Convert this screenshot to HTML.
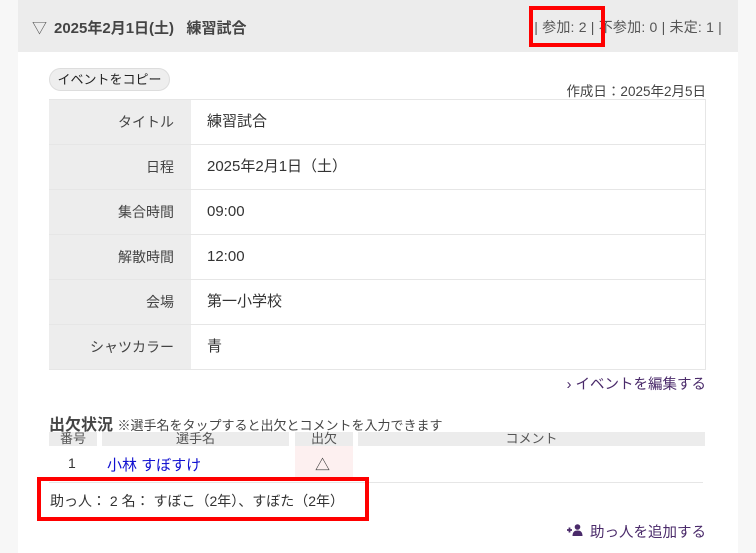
<!DOCTYPE html>
<html><head><meta charset="utf-8"><style>
*{margin:0;padding:0;box-sizing:border-box}
body{width:756px;height:553px;background:#f7f7f7;font-family:"Liberation Sans","Noto Sans CJK JP",sans-serif;color:#333;position:relative;overflow:hidden}
.panel{position:absolute;left:18px;top:0;width:720px;height:553px;background:#fff}
.hdr{position:absolute;left:18px;top:0;width:720px;height:52px;background:#ececec}
.a{position:absolute;white-space:nowrap}
.r{position:absolute;white-space:nowrap;text-align:right}
.lab{position:absolute;left:49px;width:142px;height:44px;background:#ededed;text-align:right;padding-right:17px;font-size:14px;line-height:44px;color:#444}
.val{position:absolute;left:192px;width:514px;height:44px;font-size:15px;line-height:44px;padding-left:15px;color:#333}
.line{position:absolute;left:49px;width:657px;height:1px;background:#e6e6e6}
.th{position:absolute;top:432px;height:14px;background:#ececec;font-size:13px;line-height:14px;text-align:center;color:#555}
.red{position:absolute;border:4px solid #f00}
</style></head><body>
<div class="panel"></div>
<div class="hdr"></div>
<div class="a" style="left:32px;top:17px;font-size:15px;color:#555">▽</div>
<div class="a" style="left:54px;top:17px;font-size:15px;font-weight:bold;color:#444">2025年2月1日(土)&nbsp;&nbsp; 練習試合</div>
<div class="r" style="right:34px;top:17px;font-size:14px;letter-spacing:0.2px;color:#555">| 参加: 2 | 不参加: 0 | 未定: 1 |</div>
<div class="red" style="left:529px;top:6px;width:76px;height:41px"></div>
<div class="a" style="left:49px;top:68px;width:121px;height:23px;border:1px solid #ddd;border-radius:12px;background:#eee;font-size:13px;line-height:21px;text-align:center;color:#222">イベントをコピー</div>
<div class="r" style="right:50px;top:80px;font-size:13.5px;color:#444">作成日：2025年2月5日</div>
<div class="line" style="top:99px"></div>
<div style="position:absolute;left:705px;top:99px;width:1px;height:270px;background:#e6e6e6"></div>
<div class="lab" style="top:100px">タイトル</div><div class="val" style="top:100px">練習試合</div>
<div class="line" style="top:144px"></div>
<div class="lab" style="top:145px">日程</div><div class="val" style="top:145px">2025年2月1日（土）</div>
<div class="line" style="top:189px"></div>
<div class="lab" style="top:190px">集合時間</div><div class="val" style="top:190px">09:00</div>
<div class="line" style="top:234px"></div>
<div class="lab" style="top:235px">解散時間</div><div class="val" style="top:235px">12:00</div>
<div class="line" style="top:279px"></div>
<div class="lab" style="top:280px">会場</div><div class="val" style="top:280px">第一小学校</div>
<div class="line" style="top:324px"></div>
<div class="lab" style="top:325px">シャツカラー</div><div class="val" style="top:325px">青</div>
<div class="line" style="top:369px"></div>
<div class="r" style="right:50px;top:373px;font-size:14.5px;color:#4a2a6a">› イベントを編集する</div>
<div class="a" style="left:49px;top:411px;font-size:16px;font-weight:bold;color:#444">出欠状況 <span style="font-size:13px;font-weight:normal;color:#444">※選手名をタップすると出欠とコメントを入力できます</span></div>
<div class="th" style="left:49px;width:48px">番号</div>
<div class="th" style="left:102px;width:187px">選手名</div>
<div class="th" style="left:295px;width:58px">出欠</div>
<div class="th" style="left:358px;width:347px">コメント</div>
<div style="position:absolute;left:295px;top:446px;width:58px;height:34px;background:#fdf0f0"></div>
<div class="a" style="left:68px;top:455px;font-size:14px">1</div>
<div class="a" style="left:107px;top:454px;font-size:15px;color:#1010d0">小林 すぼすけ</div>
<div class="a" style="left:315px;top:454px;font-size:15px;color:#333">△</div>
<div class="line" style="top:482px;left:49px;width:654px"></div>
<div class="a" style="left:50px;top:491px;font-size:14px;color:#333">助っ人： 2 名： すぼこ（2年）、すぼた（2年）</div>
<div class="red" style="left:37px;top:477px;width:332px;height:44px"></div>
<svg class="a" style="left:567px;top:524px" width="16" height="12" viewBox="0 0 16 12"><path d="M0 6h5M2.5 3.5v5" stroke="#4a2a6a" stroke-width="1.8"/><circle cx="10.5" cy="3" r="2.8" fill="#4a2a6a"/><path d="M5.5 12c0-4 2-5.5 5-5.5s5 1.5 5 5.5z" fill="#4a2a6a"/></svg>
<div class="r" style="right:50px;top:521px;font-size:14.5px;color:#4a2a6a">助っ人を追加する</div>
</body></html>
